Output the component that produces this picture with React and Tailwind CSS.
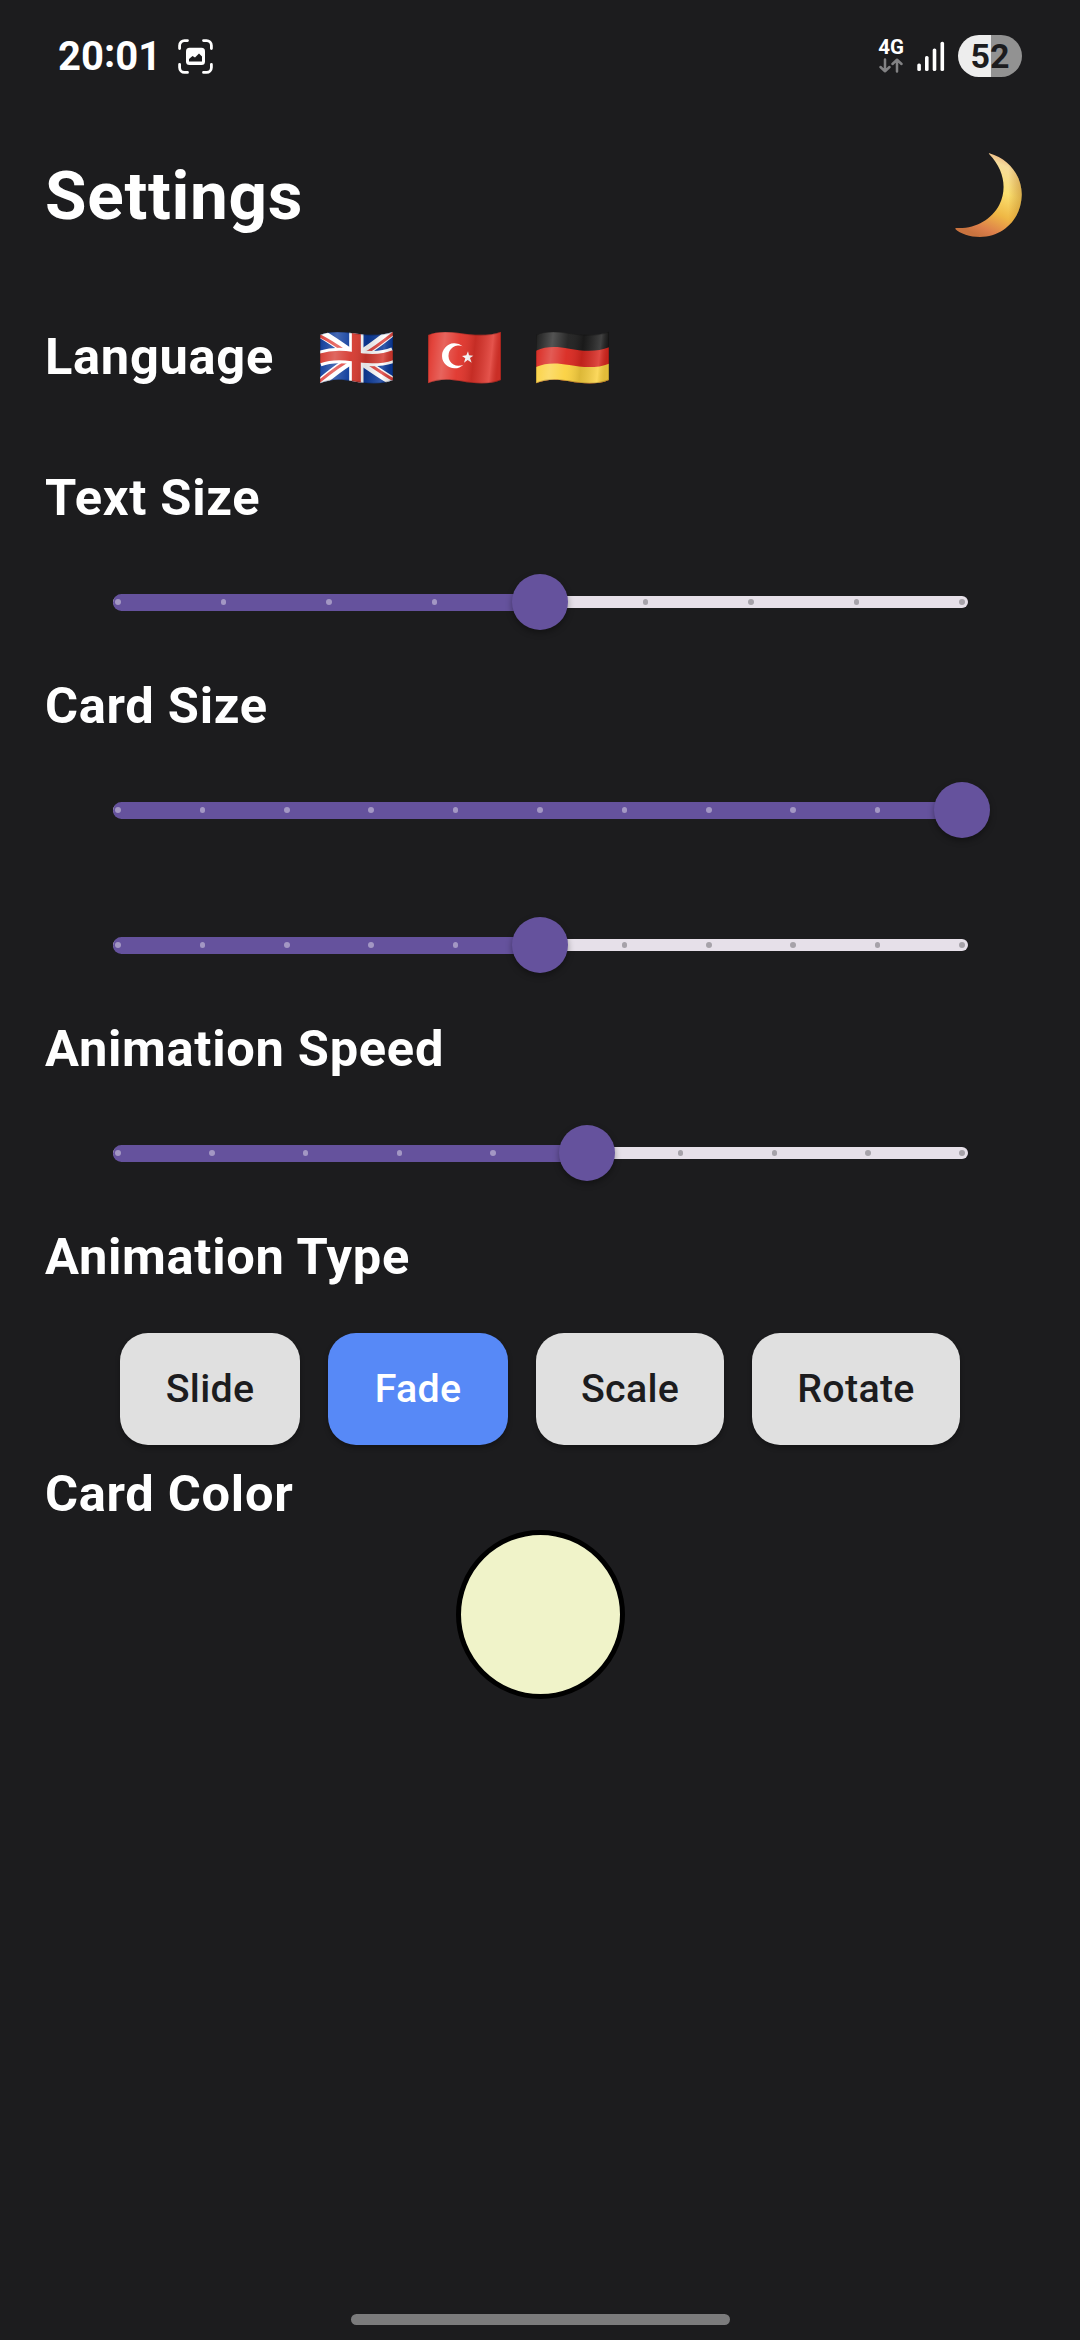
const WAVE =
  "M0 15 C20 4 60 4 95 9 C135 16 185 18 219 5 L219 150 C185 165 140 162 100 154 C60 146 30 147 0 160 Z";

const CRESCENT =
  "M178 41 C238 58 276 110 275 166 C274 238 219 292 150 292 C120 292 90 282 76 268 C75 265 78 264 83 265 C137 267 184 240 208 195 C232 147 222 90 178 44 C176 42 176 41 178 41 Z";

function Flag({ id, label, children }) {
  return (
    <svg className="h-[55px] w-[73px]" viewBox="0 0 219 165" role="img" aria-label={label}>
      <defs>
        <clipPath id={`${id}-clip`}>
          <path d={WAVE} />
        </clipPath>
        <linearGradient id={`${id}-shade`} x1="0" x2="1" y1="0" y2="0.08">
          <stop offset="0" stopColor="#000" stopOpacity="0.12" />
          <stop offset="0.08" stopColor="#fff" stopOpacity="0.08" />
          <stop offset="0.24" stopColor="#fff" stopOpacity="0.24" />
          <stop offset="0.45" stopColor="#fff" stopOpacity="0.05" />
          <stop offset="0.66" stopColor="#000" stopOpacity="0.12" />
          <stop offset="0.9" stopColor="#fff" stopOpacity="0.16" />
          <stop offset="1" stopColor="#000" stopOpacity="0.1" />
        </linearGradient>
      </defs>
      <g clipPath={`url(#${id}-clip)`}>
        {children}
        <rect width="219" height="165" fill={`url(#${id}-shade)`} />
        <path d={WAVE} fill="none" stroke="#000" strokeOpacity="0.22" strokeWidth="5" />
      </g>
    </svg>
  );
}

function BritishFlag() {
  return (
    <Flag id="gb" label="English">
      <rect width="219" height="165" fill="#0b3a9b" />
      <g fill="none" stroke="#fff" strokeWidth="27">
        <path d="M-6 6 C35 28 70 55 109 82 C150 110 185 135 225 158" />
        <path d="M-6 164 C35 130 70 100 109 82 C150 58 185 30 225 -2" />
      </g>
      <g fill="none" stroke="#e0453f" strokeWidth="9">
        <path d="M-4 16 C30 32 55 50 90 74" />
        <path d="M128 90 C160 110 190 133 225 152" />
        <path d="M-4 156 C30 128 60 104 92 88" />
        <path d="M126 76 C155 60 190 34 225 6" />
      </g>
      <g fill="none">
        <path d="M-4 87 C30 74 60 74 98 80 C140 88 185 90 223 74" stroke="#fff" strokeWidth="46" />
        <path d="M109 0 V165" stroke="#fff" strokeWidth="43" />
        <path d="M-4 87 C30 74 60 74 98 80 C140 88 185 90 223 74" stroke="#d5392f" strokeWidth="28" />
        <path d="M109 0 V165" stroke="#d5392f" strokeWidth="27" />
      </g>
    </Flag>
  );
}

function TurkishFlag() {
  return (
    <Flag id="tr" label="Türkçe">
      <rect width="219" height="165" fill="#e0332a" />
      <path d="M104 49 A37.5 37.5 0 1 0 106 104 A30.5 30.5 0 1 1 104 49 Z" fill="#fff" />
      <path
        d="M120 64 L123 76 L136 77 L126 84 L131 98 L119 90 L108 98 L112 85 L102 78 L115 76 Z"
        fill="#fff"
      />
    </Flag>
  );
}

function GermanFlag() {
  return (
    <Flag id="de" label="Deutsch">
      <rect width="219" height="165" fill="#1d1d1d" />
      <path d="M0 62 C30 49 60 49 100 56 C140 64 185 66 219 52 V165 H0 Z" fill="#d9271f" />
      <path d="M0 111 C30 98 60 98 100 105 C140 113 185 115 219 101 V165 H0 Z" fill="#fbd13f" />
    </Flag>
  );
}

function Moon() {
  return (
    <svg className="h-[84px] w-[67px]" viewBox="75 40 201 252" role="img" aria-label="Dark mode">
      <defs>
        <linearGradient id="moon-fill" x1="0.75" y1="0" x2="0.4" y2="1">
          <stop offset="0" stopColor="#e9a877" />
          <stop offset="0.14" stopColor="#f6dc9c" />
          <stop offset="0.42" stopColor="#fbe070" />
          <stop offset="0.68" stopColor="#efb845" />
          <stop offset="0.9" stopColor="#dd7f4b" />
          <stop offset="1" stopColor="#c9733f" />
        </linearGradient>
        <linearGradient id="moon-edge" x1="0" y1="0" x2="1" y2="0">
          <stop offset="0.8" stopColor="#b06a15" stopOpacity="0" />
          <stop offset="1" stopColor="#b87a1c" stopOpacity="0.5" />
        </linearGradient>
      </defs>
      <path d={CRESCENT} fill="url(#moon-fill)" />
      <path d={CRESCENT} fill="url(#moon-edge)" />
    </svg>
  );
}

function StatusBar() {
  return (
    <header className="flex h-[112px] items-center justify-between px-[58px] text-white">
      <div className="flex w-[155px] items-center justify-between">
        <div className="flex pt-[2px] text-[40px] leading-none font-bold">
          <span>20</span>
          <span className="relative -top-[3px]">:</span>
          <span>01</span>
        </div>
        <svg className="h-[35px] w-[35px]" viewBox="0 0 35 35" fill="none">
          <path
            d="M1.6 9.5 V6.5 A4.9 4.9 0 0 1 6.5 1.6 H9.5 M25.5 1.6 H28.5 A4.9 4.9 0 0 1 33.4 6.5 V9.5 M33.4 25.5 V28.5 A4.9 4.9 0 0 1 28.5 33.4 H25.5 M9.5 33.4 H6.5 A4.9 4.9 0 0 1 1.6 28.5 V25.5"
            stroke="#fff"
            strokeWidth="2.8"
            strokeLinecap="round"
          />
          <rect x="8" y="8.7" width="19" height="17.4" rx="3.5" fill="#fff" />
          <path d="M11 22.5 V20 L14.5 17 L17 18.5 L21 14.5 L24 17.5 V22.5 Z" fill="#1c1c1e" />
        </svg>
      </div>
      <div className="flex items-center">
        <div className="flex w-[26px] flex-col items-center gap-[3px]">
          <span className="h-[15px] text-[20.5px] leading-[15px] font-bold">4G</span>
          <svg
            className="h-[15px] w-[24px]"
            viewBox="0 0 24 15"
            fill="none"
            stroke="#828284"
            strokeWidth="2.5"
            strokeLinecap="round"
            strokeLinejoin="round"
          >
            <path d="M6 1.5 V13.3 M1.5 9 L6 13.3 L10.5 9 M18 13.5 V1.7 M13.5 6 L18 1.7 L22.5 6" />
          </svg>
        </div>
        <svg className="ml-[13px] h-[30px] w-[28px]" viewBox="0 0 28 30" fill="#fff">
          <rect x="0.3" y="22.5" width="3.6" height="7.5" rx="1.6" />
          <rect x="8" y="15" width="3.6" height="15" rx="1.6" />
          <rect x="15.7" y="7.5" width="3.6" height="22.5" rx="1.6" />
          <rect x="23.5" y="0.8" width="3.6" height="29.2" rx="1.6" />
        </svg>
        <div className="ml-[13px] flex h-[42px] w-[64px] items-center justify-center rounded-full bg-linear-to-r from-[#ededed] from-[52%] to-[#929292] to-[52%] text-[34px] leading-none font-bold text-[#1c1c1e]">
          52
        </div>
      </div>
    </header>
  );
}

function SectionTitle({ children }) {
  return (
    <h2 className="flex h-[73px] items-center pt-[1px] text-[50.6px] leading-none font-bold tracking-[0.7px]">
      {children}
    </h2>
  );
}

function Slider({ steps, value }) {
  const reach = 5.6 + (843.75 * value) / (steps - 1);
  return (
    <div className="flex h-[135px] items-center px-[67.5px] pt-[1px]">
      <div className="relative flex h-[17px] w-full items-center">
        <div className="h-[11.25px] w-full rounded-full bg-[#e6e0e9]" />
        <div
          className="absolute left-0 h-[17px] rounded-l-full bg-[#65529d]"
          style={{ width: reach }}
        />
        <div className="absolute inset-0 flex items-center justify-between px-[2.8px]">
          {Array.from({ length: steps }, (_, i) => (
            <span
              key={i}
              className={`size-[5.6px] rounded-full ${i <= value ? "bg-[#a397c4]" : "bg-[#a6a2a9]"}`}
            />
          ))}
        </div>
        <div
          className="absolute size-[56px] -translate-x-1/2 rounded-full bg-[#65529d] shadow-[0_3px_6px_rgba(0,0,0,0.35)]"
          style={{ left: reach }}
        />
      </div>
    </div>
  );
}

function TypeButton({ active, width, children }) {
  return (
    <button
      className={`flex h-[112.5px] items-center justify-center rounded-[28px] text-[39.4px] leading-none font-medium tracking-[0.28px] shadow-[0_3px_5px_rgba(0,0,0,0.3)] ${width} ${
        active ? "bg-[#5789f7] text-white" : "bg-[#e0e0e0] text-[#1c1c1e]"
      }`}
    >
      {children}
    </button>
  );
}

export default function App() {
  return (
    <div className="flex h-[2340px] w-[1080px] flex-col bg-[#1c1c1e] font-['Roboto',sans-serif] text-white">
      <StatusBar />
      <main className="flex flex-1 flex-col px-[45px]">
        <div className="flex h-[166px] items-center justify-between pr-[13px]">
          <h1 className="pt-[2px] text-[67.5px] leading-none font-bold tracking-[0.7px]">Settings</h1>
          <Moon />
        </div>
        <div className="mb-[26px] flex h-[157px] items-center">
          <SectionTitle>Language</SectionTitle>
          <div className="ml-[46px] flex gap-[35px] pt-[2px]">
            <BritishFlag />
            <TurkishFlag />
            <GermanFlag />
          </div>
        </div>
        <SectionTitle>Text Size</SectionTitle>
        <Slider steps={9} value={4} />
        <SectionTitle>Card Size</SectionTitle>
        <Slider steps={11} value={10} />
        <Slider steps={11} value={5} />
        <SectionTitle>Animation Speed</SectionTitle>
        <Slider steps={10} value={5} />
        <SectionTitle>Animation Type</SectionTitle>
        <div className="flex h-[164px] items-center justify-center gap-[28px] pt-[28px]">
          <TypeButton width="w-[180px]">Slide</TypeButton>
          <TypeButton width="w-[180px]" active>
            Fade
          </TypeButton>
          <TypeButton width="w-[188px]">Scale</TypeButton>
          <TypeButton width="w-[208px]">Rotate</TypeButton>
        </div>
        <SectionTitle>Card Color</SectionTitle>
        <div className="size-[169px] self-center rounded-full border-[5.6px] border-black bg-[#f0f3c9]" />
      </main>
      <div className="mb-[15px] h-[11px] w-[379px] self-center rounded-full bg-[#7b7b7c]" />
    </div>
  );
}
